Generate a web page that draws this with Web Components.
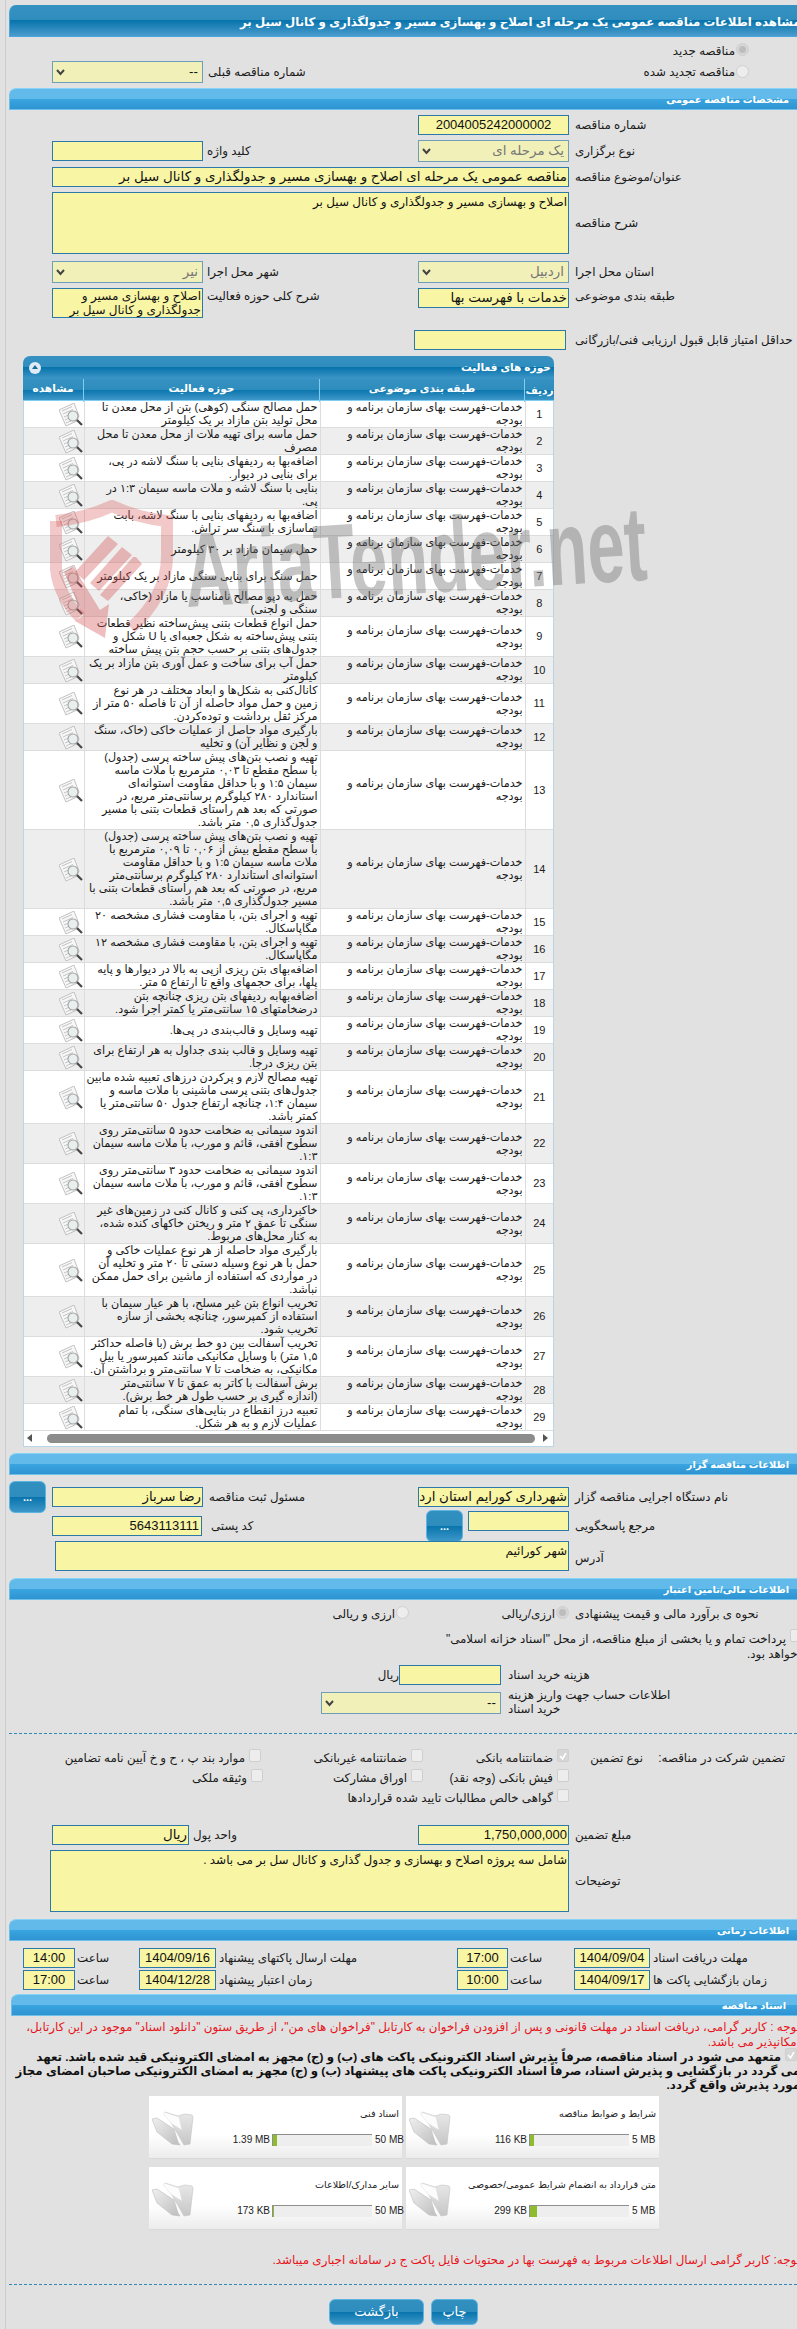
<!DOCTYPE html>
<html lang="fa">
<head>
<meta charset="utf-8">
<title>مشاهده اطلاعات مناقصه</title>
<style>
  html,body{margin:0;padding:0;width:797px;height:2329px;overflow:hidden}
  body{background:linear-gradient(#cbcbcb,#cbcbcb) 5px 0/1px 100% no-repeat #e1e1e1;padding-top:5px;box-sizing:border-box;position:relative;
    font:11.850px "Liberation Sans","DejaVu Sans",sans-serif;color:#1a1a1a}
  .std{grid-template-columns:52px 151px 215px 151px 1fr}
  .a{grid-column:2}.b{grid-column:3}.c{grid-column:4}.d{grid-column:5}
  .wide{grid-column:2/5}
  .rt{justify-self:end}
  .mid{align-self:center}
  .num{font-size:13px}
</style>
</head>
<body>
<page-title style="margin-left:9px">مشاهده اطلاعات مناقصه عمومی یک مرحله ای اصلاح و بهسازی مسیر و جدولگذاری و کانال سیل بر</page-title>

<form-row style="margin-top:6px;height:13px;grid-template-columns:749px">
  <x-choice class="rt" type="radio" state="on">مناقصه جدید</x-choice>
</form-row>
<form-row style="margin-top:5px;height:22px;grid-template-columns:52px 151px 546px">
  <x-select class="a">--</x-select>
  <x-label class="b" style="grid-row:1;justify-self:start;padding-left:5px;align-self:center">شماره مناقصه قبلی</x-label>
  <x-choice class="b rt" style="grid-row:1;--bm:1px" type="radio">مناقصه تجدید شده</x-choice>
</form-row>

<section-bar style="margin-top:5px">مشخصات مناقصه عمومی</section-bar>

<form-row class="std" style="margin-top:5px;height:20px">
  <x-field class="c num" style="text-align:center">2004005242000002</x-field>
  <x-label class="d" style="padding-left:6px">شماره مناقصه</x-label>
</form-row>
<form-row class="std" style="margin-top:5px;height:22px">
  <x-field class="a mid"></x-field>
  <x-label class="b" style="padding-left:4px">کلید واژه</x-label>
  <x-select class="c" off>یک مرحله ای</x-select>
  <x-label class="d" style="padding-left:6px">نوع برگزاری</x-label>
</form-row>
<form-row class="std" style="margin-top:5px;height:20px">
  <x-field class="wide">مناقصه عمومی یک مرحله ای اصلاح و بهسازی مسیر و جدولگذاری و کانال سیل بر</x-field>
  <x-label class="d" style="padding-left:6px">عنوان/موضوع مناقصه</x-label>
</form-row>
<form-row class="std" style="margin-top:5px;height:62px">
  <x-field class="wide" area>اصلاح و بهسازی مسیر و جدولگذاری و کانال سیل بر</x-field>
  <x-label class="d" style="padding-left:6px">شرح مناقصه</x-label>
</form-row>
<form-row class="std" style="margin-top:7px;height:22px">
  <x-select class="a" off>نیر</x-select>
  <x-label class="b" style="padding-left:4px">شهر محل اجرا</x-label>
  <x-select class="c" off>اردبیل</x-select>
  <x-label class="d" style="padding-left:6px">استان محل اجرا</x-label>
</form-row>
<form-row class="std" style="margin-top:5px;height:30px">
  <x-field class="a" area style="padding-top:0;line-height:14px">اصلاح و بهسازی مسیر و<br>جدولگذاری و کانال سیل بر</x-field>
  <x-label class="b" style="padding-left:4px;align-self:start">شرح کلی حوزه فعالیت</x-label>
  <x-field class="c" style="height:20px;align-self:start">خدمات با فهرست بها</x-field>
  <x-label class="d" style="padding-left:6px;align-self:start">طبقه بندی موضوعی</x-label>
</form-row>
<form-row style="margin-top:12px;height:20px;grid-template-columns:414px 152px 1fr">
  <x-field style="grid-column:2"></x-field>
  <x-label style="grid-column:3;padding-left:9px">حداقل امتیاز قابل قبول ارزیابی فنی/بازرگانی</x-label>
</form-row>

<activity-table style="margin:6px 0 0 23px"></activity-table>

<section-bar style="margin-top:6px">اطلاعات مناقصه گزار</section-bar>

<form-row class="std" style="margin-top:6px;height:23px">
  <x-btn style="margin-left:9px;width:37px" dots>...</x-btn>
  <x-field class="a mid">رضا سرباز</x-field>
  <x-label class="b" style="padding-left:6px">مسئول ثبت مناقصه</x-label>
  <x-field class="c mid">شهرداری کورایم استان ارد</x-field>
  <x-label class="d" style="padding-left:6px">نام دستگاه اجرایی مناقصه گزار</x-label>
</form-row>
<form-row style="margin-top:6px;height:26px;grid-template-columns:52px 150px 224px 37px 5px 101px 1fr">
  <x-field class="mid num" style="grid-column:2;height:20px;padding-right:2px">5643113111</x-field>
  <x-label style="grid-column:3;padding-left:9px">کد پستی</x-label>
  <x-btn style="grid-column:4" dots>...</x-btn>
  <x-field style="grid-column:6;height:20px;margin-top:1px;align-self:start"></x-field>
  <x-label style="grid-column:7;padding-left:6px">مرجع پاسخگویی</x-label>
</form-row>
<form-row style="margin-top:5px;height:30px;grid-template-columns:55px 514px 1fr">
  <x-field style="grid-column:2" area>شهر کورائیم</x-field>
  <x-label style="grid-column:3;padding-left:6px;padding-top:4px">آدرس</x-label>
</form-row>

<section-bar style="margin-top:7px">اطلاعات مالی/تامین اعتبار</section-bar>

<form-row style="margin-top:6px;height:14px;grid-template-columns:333px 76px 93px 67px 1fr">
  <x-choice class="rt" style="grid-column:2" type="radio">ارزی و ریالی</x-choice>
  <x-choice class="rt" style="grid-column:4" type="radio" state="on">ارزی/ریالی</x-choice>
  <x-label style="grid-column:5;padding-left:6px">نحوه ی برآورد مالی و قیمت پیشنهادی</x-label>
</form-row>
<form-row style="margin-top:9px;height:17px;grid-template-columns:433px 353px 1fr">
  <x-label style="grid-column:2;justify-self:end;padding-top:2px">پرداخت تمام و یا بخشی از مبلغ مناقصه، از محل "اسناد خزانه اسلامی"</x-label>
  <x-choice style="grid-column:3;align-self:start;--bm:0px" type="check"></x-choice>
</form-row>
<form-row style="height:14px;grid-template-columns:747px 1fr">
  <x-label style="grid-column:2">خواهد بود.</x-label>
</form-row>
<form-row style="margin-top:5px;height:20px;grid-template-columns:380px 19px 102px 1fr">
  <x-label style="grid-column:2">ریال</x-label>
  <x-field style="grid-column:3"></x-field>
  <x-label style="grid-column:4;padding-left:7px">هزینه خرید اسناد</x-label>
</form-row>
<form-row style="margin-top:5px;height:22px;grid-template-columns:321px 180px 1fr">
  <x-select style="grid-column:2">--</x-select>
  <x-label style="grid-column:3;padding-left:7px;align-self:start;margin-top:-2px;line-height:14px;white-space:normal">اطلاعات حساب جهت واریز هزینه<br>خرید اسناد</x-label>
</form-row>

<dash-line style="margin-top:21px"></dash-line>

<form-row style="margin-top:14px;height:20px;grid-template-columns:261px 162px 146px 74px 142px">
  <x-choice class="rt" type="check">موارد بند پ ، ح و خ آیین نامه تضامین</x-choice>
  <x-choice class="rt" type="check">ضمانتنامه غیربانکی</x-choice>
  <x-choice class="rt" type="check" state="on">ضمانتنامه بانکی</x-choice>
  <x-label class="rt">نوع تضمین</x-label>
  <x-label class="rt">تضمین شرکت در مناقصه:</x-label>
</form-row>
<form-row style="height:20px;grid-template-columns:263px 160px 146px">
  <x-choice class="rt" type="check">وثیقه ملکی</x-choice>
  <x-choice class="rt" type="check">اوراق مشارکت</x-choice>
  <x-choice class="rt" type="check">فیش بانکی (وجه نقد)</x-choice>
</form-row>
<form-row style="height:20px;grid-template-columns:569px">
  <x-choice class="rt" type="check">گواهی خالص مطالبات تایید شده قراردادها</x-choice>
</form-row>

<form-row style="margin-top:17px;height:20px;grid-template-columns:52px 137px 229px 151px 1fr">
  <x-field style="grid-column:2">ریال</x-field>
  <x-label style="grid-column:3;padding-left:4px">واحد پول</x-label>
  <x-field class="num" style="grid-column:4">1,750,000,000</x-field>
  <x-label style="grid-column:5;padding-left:6px">مبلغ تضمین</x-label>
</form-row>
<form-row style="margin-top:5px;height:62px;grid-template-columns:50px 519px 1fr">
  <x-field style="grid-column:2" area>شامل سه پروژه اصلاح و بهسازی و جدول گذاری و کانال سل بر می باشد .</x-field>
  <x-label style="grid-column:3;padding-left:6px">توضیحات</x-label>
</form-row>

<section-bar style="margin-top:7px">اطلاعات زمانی</section-bar>

<form-row style="margin-top:7px;height:20px;grid-template-columns:23px 52px 64px 77px 241px 51px 66px 76px 1fr">
  <x-field class="num" style="grid-column:2;text-align:center">14:00</x-field>
  <x-label style="padding-left:2px">ساعت</x-label>
  <x-field class="num" style="text-align:center">1404/09/16</x-field>
  <x-label style="padding-left:3px">مهلت ارسال پاکتهای پیشنهاد</x-label>
  <x-field class="num" style="text-align:center">17:00</x-field>
  <x-label style="padding-left:2px">ساعت</x-label>
  <x-field class="num" style="text-align:center">1404/09/04</x-field>
  <x-label style="padding-left:3px">مهلت دریافت اسناد</x-label>
</form-row>
<form-row style="margin-top:2px;height:20px;grid-template-columns:23px 52px 64px 77px 241px 51px 66px 76px 1fr">
  <x-field class="num" style="grid-column:2;text-align:center">17:00</x-field>
  <x-label style="padding-left:2px">ساعت</x-label>
  <x-field class="num" style="text-align:center">1404/12/28</x-field>
  <x-label style="padding-left:3px">زمان اعتبار پیشنهاد</x-label>
  <x-field class="num" style="text-align:center">10:00</x-field>
  <x-label style="padding-left:2px">ساعت</x-label>
  <x-field class="num" style="text-align:center">1404/09/17</x-field>
  <x-label style="padding-left:3px">زمان بازگشایی پاکت ها</x-label>
</form-row>

<section-bar style="margin-top:4px;margin-left:11px;padding-right:11px">اسناد مناقصه</section-bar>

<note-text tone="red" style="margin-top:4px">توجه : کاربر گرامی، دریافت اسناد در مهلت قانونی و پس از افزودن فراخوان به کارتابل "فراخوان های من"، از طریق ستون "دانلود اسناد" موجود در این کارتابل،<br>امکانپذیر می باشد.</note-text>
<note-text tone="bold" style="margin-top:1px"><x-choice type="check" state="on" style="vertical-align:top;margin-right:3px;line-height:14px;--bm:-2px"></x-choice>متعهد می شود در اسناد مناقصه، صرفاً پذیرش اسناد الکترونیکی پاکت های (ب) و (ج) مجهز به امضای الکترونیکی قید شده باشد. تعهد<br>می گردد در بازگشایی و پذیرش اسناد، صرفاً اسناد الکترونیکی پاکت های پیشنهاد (ب) و (ج) مجهز به امضای الکترونیکی صاحبان امضای مجاز<br>مورد پذیرش واقع گردد.</note-text>

<form-row style="margin-top:4px;grid-template-columns:149px 253px 4px 253px;row-gap:8px">
  <doc-card style="grid-column:2" title="اسناد فنی" used="1.39 MB" max="50 MB" fill="4"></doc-card>
  <doc-card style="grid-column:4" title="شرایط و ضوابط مناقصه" used="116 KB" max="5 MB" fill="4"></doc-card>
  <doc-card style="grid-column:2" title="سایر مدارک/اطلاعات" used="173 KB" max="50 MB" fill="1"></doc-card>
  <doc-card style="grid-column:4" title="متن قرارداد به انضمام شرایط عمومی/خصوصی" used="299 KB" max="5 MB" fill="7"></doc-card>
</form-row>

<note-text tone="red" style="margin-top:23px">توجه: کاربر گرامی ارسال اطلاعات مربوط به فهرست بها در محتویات فایل پاکت ج در سامانه اجباری میباشد.</note-text>

<dash-line style="margin-top:16px"></dash-line>

<form-row style="margin-top:14px;height:26px;grid-template-columns:329px 95px 7px 47px">
  <x-btn style="grid-column:2">بازگشت</x-btn>
  <x-btn style="grid-column:4">چاپ</x-btn>
</form-row>

<water-mark></water-mark>

<script>
// نوار عنوان صفحه
class PageTitle extends HTMLElement {
  constructor() {
    super();
    this.attachShadow({ mode: "open" }).innerHTML = `
      <style>
        :host{display:block;height:32px;box-sizing:border-box;border:1px solid #4ba6de;border-width:0 0 1px 1px;border-top-left-radius:7px;
          background:linear-gradient(#3591c1 0,#2f8dbe 50%,#0874ac 50%,#4a9ccd 100%);
          color:#fff;font-weight:bold;font-size:11.750px;line-height:33px;white-space:nowrap;overflow:hidden;padding-left:230px;direction:ltr}
        span{direction:rtl;unicode-bidi:isolate;display:inline-block}
      </style><span><slot></slot></span>`;
  }
}
customElements.define("page-title", PageTitle);

// نوار عنوان بخش ها
class SectionBar extends HTMLElement {
  constructor() {
    super();
    this.attachShadow({ mode: "open" }).innerHTML = `
      <style>
        :host{display:block;height:22px;box-sizing:border-box;margin-left:9px;border-top:1px solid #86d3f5;border-bottom:1px solid #6cc0ea;border-left:1px solid #6cc0ea;border-top-left-radius:7px;
          background:linear-gradient(#62baea 0,#62baea 50%,#39a5e0 50%,#2f93d2 100%);
          color:#fff;font-weight:bold;font-size:9.800px;line-height:21px;direction:rtl;padding-right:8px;white-space:nowrap}
      </style><slot></slot>`;
  }
}
customElements.define("section-bar", SectionBar);

// سطر فرم: ستون ها از استایل خود عنصر می آیند
class FormRow extends HTMLElement {
  constructor() {
    super();
    this.attachShadow({ mode: "open" }).innerHTML = `
      <style>:host{display:grid;direction:ltr;align-items:center}</style><slot></slot>`;
  }
}
customElements.define("form-row", FormRow);

class XLabel extends HTMLElement {
  constructor() {
    super();
    this.attachShadow({ mode: "open" }).innerHTML = `
      <style>:host{display:block;direction:rtl;text-align:left;white-space:nowrap;line-height:16px;color:#1a1a1a}</style><slot></slot>`;
  }
}
customElements.define("x-label", XLabel);

class XField extends HTMLElement {
  constructor() {
    super();
    this.attachShadow({ mode: "open" }).innerHTML = `
      <style>
        :host{display:block;box-sizing:border-box;height:20px;border:1px solid #2a79a8;background:#f8f5a4;direction:rtl;
          padding:0 1px;font-size:13.400px;line-height:18px;white-space:nowrap;overflow:hidden;color:#111}
        :host([area]){height:100%;white-space:nowrap;line-height:14.300px;padding-top:2px;font-size:12px}
      </style><slot></slot>`;
  }
}
customElements.define("x-field", XField);

class XSelect extends HTMLElement {
  constructor() {
    super();
    this.attachShadow({ mode: "open" }).innerHTML = `
      <style>
        :host{display:block;box-sizing:border-box;height:22px;border:1px solid #6f9fb8;background:#f1f0b9;direction:rtl;position:relative;
          padding:0 4px;font-size:13.400px;line-height:20px;white-space:nowrap;color:#111}
        :host([off]){color:#777}
        svg{position:absolute;left:3px;top:7px}
      </style><slot></slot>
      <svg width="9" height="7" viewBox="0 0 9 7"><path d="M1 1l3.500 4L8 1" fill="none" stroke="#444" stroke-width="2"/></svg>`;
  }
}
customElements.define("x-select", XSelect);

// رادیو و چک باکس غیرفعال به همراه متن
class XChoice extends HTMLElement {
  constructor() {
    super();
    const radio = this.getAttribute("type") === "radio";
    const on = this.getAttribute("state") === "on";
    let mark = "";
    if (on && radio) mark = `<i class="dot"></i>`;
    if (on && !radio) mark = `<svg width="11" height="12" viewBox="0 0 12 12"><path d="M2.500 6l3 3.500L9.500 2.500" fill="none" stroke="#fff" stroke-width="2"/></svg>`;
    this.attachShadow({ mode: "open" }).innerHTML = `
      <style>
        :host{display:inline-flex;direction:rtl;gap:${radio ? 1 : 4}px;align-items:flex-start;white-space:nowrap;line-height:16px;color:#1a1a1a}
        b{flex:none;box-sizing:border-box;width:${radio ? 13 : 12}px;height:13px;border:1px solid #cfcfcf;background:#ededed;display:flex;align-items:center;justify-content:center;
          border-radius:${radio ? "50%" : "2px"};margin-top:var(--bm,${radio ? 0 : -1}px);font-weight:normal}
        b.on{background:#d6d6d6}
        .dot{width:7px;height:7px;border-radius:50%;background:#bdbdbd}
      </style>
      <b class="${on ? "on" : ""}">${mark}</b><span><slot></slot></span>`;
  }
}
customElements.define("x-choice", XChoice);

class XBtn extends HTMLElement {
  constructor() {
    super();
    this.attachShadow({ mode: "open" }).innerHTML = `
      <style>
        :host{display:block;box-sizing:border-box;height:26px;border:1px solid #5bb5e0;border-radius:6px;text-align:center;color:#fff;font-size:13px;line-height:24px;
          background:linear-gradient(#3290c1 0,#2f8dbe 50%,#0874ac 50%,#3d97c9 100%)}
        :host([dots]){height:100%;font-size:11px;font-weight:bold;line-height:30px}
      </style><slot></slot>`;
  }
}
customElements.define("x-btn", XBtn);

class DashLine extends HTMLElement {
  constructor() {
    super();
    this.attachShadow({ mode: "open" }).innerHTML = `
      <style>:host{display:block;margin-left:9px;border-top:1px dashed #2f88b8;height:0}</style>`;
  }
}
customElements.define("dash-line", DashLine);

class NoteText extends HTMLElement {
  constructor() {
    super();
    this.attachShadow({ mode: "open" }).innerHTML = `
      <style>
        :host{display:block;direction:rtl;width:800px;white-space:nowrap;line-height:14px;color:#111}
        :host([tone=red]){color:#e8141c;font-size:11.900px;line-height:14.500px}
        :host([tone=bold]){font-weight:bold;font-size:11.800px;line-height:14px}
      </style><slot></slot>`;
  }
}
customElements.define("note-text", NoteText);

const FOLDER_ICON = `<svg width="42" height="36" viewBox="0 0 42 36">
  <defs>
    <linearGradient id="f" x1="0" y1="0" x2="1" y2="1"><stop offset="0" stop-color="#f0f0f0"/><stop offset="1" stop-color="#bdbdbd"/></linearGradient>
    <linearGradient id="k" x1="0" y1="0" x2="0" y2="1"><stop offset="0" stop-color="#e9e9e9"/><stop offset="1" stop-color="#c6c6c6"/></linearGradient>
  </defs>
  <path d="M13 2l13 4 7-2 7 1 1 2-3 27-6 1z" fill="url(#k)" stroke="#c2c2c2" stroke-width=".6"/>
  <path d="M12 2l15 5 3 13-10-6-8-9z" fill="#fcfcfc" stroke="#dcdcdc" stroke-width=".5"/>
  <path d="M0 9l5-1 17 11 4 13 2 3-8-1-15-12z" fill="url(#f)" stroke="#bdbdbd" stroke-width=".6"/>
</svg>`;

class DocCard extends HTMLElement {
  constructor() {
    super();
    const a = (n) => this.getAttribute(n);
    this.attachShadow({ mode: "open" }).innerHTML = `
      <style>
        :host{display:block;box-sizing:border-box;height:63px;position:relative;border-bottom:1px solid #d8d8d8;
          background:linear-gradient(#fff 0,#fff 62%,#ececec 100%);direction:ltr;font-size:9.600px;color:#222}
        .ico{position:absolute;left:3px;top:14px}
        .t{direction:rtl;text-align:right;padding:11px 3px 0 0;line-height:14px;white-space:nowrap}
        .s{position:absolute;left:0;right:0;top:37px;display:grid;grid-template-columns:123px 100px 30px;line-height:13px;align-items:center;font-size:10px;white-space:nowrap}
        .u{text-align:right;padding-right:2px}.m{padding-left:3px;text-align:left}
        .bar{height:12px;background:#eeeeee;border-top:1px solid #8e8e8e;box-sizing:border-box;border-left:1px solid #8e8e8e}
        .bar i{display:block;height:100%;width:${a("fill")}px;background:#8fbc2f}
      </style>
      <div class="ico">${FOLDER_ICON}</div>
      <div class="t">${a("title")}</div>
      <div class="s"><span class="u">${a("used")}</span><div class="bar"><i></i></div><span class="m">${a("max")}</span></div>`;
  }
}
customElements.define("doc-card", DocCard);

// جدول حوزه های فعالیت؛ شکست سطرها مثل تصویر ثابت است
const CAT = "خدمات-فهرست بهای سازمان برنامه و<br>بودجه";
const ACTIVITIES = [
  "حمل مصالح سنگی (کوهی) بتن از محل معدن تا<br>محل تولید بتن مازاد بر یک کیلومتر",
  "حمل ماسه برای تهیه ملات از محل معدن تا محل<br>مصرف",
  "اضافه‌بها به ردیفهای بنایی با سنگ لاشه در پی،<br>برای بنایی در دیوار.",
  "بنایی با سنگ لاشه و ملات ماسه سیمان ۱:۳ در<br>پی.",
  "اضافه‌بها به ردیفهای بنایی با سنگ لاشه، بابت<br>نماسازی با سنگ سر تراش.",
  "حمل سیمان مازاد بر ۳۰ کیلومتر",
  "حمل سنگ برای بنایی سنگی مازاد بر یک کیلومتر",
  "حمل به دپو مصالح نامناسب یا مازاد (خاکی،<br>سنگی و لجنی)",
  "حمل انواع قطعات بتنی پیش‌ساخته نظیر قطعات<br>بتنی پیش‌ساخته به شکل جعبه‌ای یا U شکل و<br>جدول‌های بتنی بر حسب حجم بتن پیش ساخته",
  "حمل آب برای ساخت و عمل آوری بتن مازاد بر یک<br>کیلومتر",
  "کانال‌کنی به شکل‌ها و ابعاد مختلف در هر نوع<br>زمین و حمل مواد حاصله از آن تا فاصله ۵۰ متر از<br>مرکز ثقل برداشت و توده‌کردن.",
  "بارگیری مواد حاصل از عملیات خاکی (خاک، سنگ<br>و لجن و نظایر آن) و تخلیه",
  "تهیه و نصب بتن‌های پیش ساخته پرسی (جدول)<br>با سطح مقطع تا ۰,۰۳ مترمربع با ملات ماسه<br>سیمان ۱:۵ و با حداقل مقاومت استوانه‌ای<br>استاندارد ۲۸۰ کیلوگرم برسانتی‌متر مربع، در<br>صورتی که بعد هم راستای قطعات بتنی با مسیر<br>جدول‌گذاری ۰,۵ متر باشد.",
  "تهیه و نصب بتن‌های پیش ساخته پرسی (جدول)<br>با سطح مقطع بیش از ۰,۰۶ تا ۰,۰۹ مترمربع با<br>ملات ماسه سیمان ۱:۵ و با حداقل مقاومت<br>استوانه‌ای استاندارد ۲۸۰ کیلوگرم برسانتی‌متر<br>مربع، در صورتی که بعد هم راستای قطعات بتنی با<br>مسیر جدول‌گذاری ۰,۵ متر باشد.",
  "تهیه و اجرای بتن، با مقاومت فشاری مشخصه ۲۰<br>مگاپاسکال.",
  "تهیه و اجرای بتن، با مقاومت فشاری مشخصه ۱۲<br>مگاپاسکال.",
  "اضافه‌بهای بتن ریزی ازپی به بالا در دیوارها و پایه<br>پلها، برای حجمهای واقع تا ارتفاع ۵ متر.",
  "اضافه‌بهابه ردیفهای بتن ریزی چنانچه بتن<br>درضخامتهای ۱۵ سانتی‌متر یا کمتر اجرا شود.",
  "تهیه وسایل و قالب‌بندی در پی‌ها.",
  "تهیه وسایل و قالب بندی جداول به هر ارتفاع برای<br>بتن ریزی درجا.",
  "تهیه مصالح لازم و پرکردن درزهای تعبیه شده مابین<br>جدول‌های بتنی پرسی ماشینی با ملات ماسه و<br>سیمان ۱:۴، چنانچه ارتفاع جدول ۵۰ سانتی‌متر یا<br>کمتر باشد.",
  "اندود سیمانی به ضخامت حدود ۵ سانتی‌متر روی<br>سطوح افقی، قائم و مورب، با ملات ماسه سیمان<br>۱:۳.",
  "اندود سیمانی به ضخامت حدود ۳ سانتی‌متر روی<br>سطوح افقی، قائم و مورب، با ملات ماسه سیمان<br>۱:۳.",
  "خاکبرداری، پی کنی و کانال کنی در زمین‌های غیر<br>سنگی تا عمق ۲ متر و ریختن خاکهای کنده شده،<br>به کنار محل‌های مربوط.",
  "بارگیری مواد حاصله از هر نوع عملیات خاکی و<br>حمل با هر نوع وسیله دستی تا ۲۰ متر و تخلیه آن<br>در مواردی که استفاده از ماشین برای حمل ممکن<br>نباشد.",
  "تخریب انواع بتن غیر مسلح، با هر عیار سیمان با<br>استفاده از کمپرسور، چنانچه بخشی از سازه<br>تخریب شود.",
  "تخریب آسفالت بین دو خط برش (با فاصله حداکثر<br>۱,۵ متر) با وسایل مکانیکی مانند کمپرسور یا بیل<br>مکانیکی، به ضخامت تا ۷ سانتی‌متر و برداشتن آن.",
  "برش آسفالت با کاتر به عمق تا ۷ سانتی‌متر<br>(اندازه گیری بر حسب طول هر خط برش).",
  "تعبیه درز انقطاع در بنایی‌های سنگی، با تمام<br>عملیات لازم و به هر شکل."
];
const VIEW_ICON = `<svg width="24" height="24" viewBox="0 0 24 24">
  <path d="M0 7L15 0l5 13-2 5-11 5z" fill="#f7f7f7" stroke="#b4b4b4" stroke-width=".8"/>
  <path d="M3 8l10-4.500M4 11l10-4.500M5 14l6-2.700M6 17l4-1.800M7 20l5-2.200" stroke="#c4c4c4" stroke-width="1" fill="none"/>
  <circle cx="14" cy="13" r="5" fill="#e9efef" stroke="#a3a3a3" stroke-width="1.100"/>
  <path d="M18 17l5 5" stroke="#474747" stroke-width="2.200"/>
</svg>`;

class ActivityTable extends HTMLElement {
  constructor() {
    super();
    const rows = ACTIVITIES.map((text, i) => `
      <tr>
        <td class="v"><div class="i">${VIEW_ICON}</div></td>
        <td class="t">${text}</td>
        <td class="t">${CAT}</td>
        <td class="n">${i + 1}</td>
      </tr>`).join("");
    this.attachShadow({ mode: "open" }).innerHTML = `
      <style>
        :host{display:block;width:531px;height:1091px;box-sizing:border-box;background:#fff;border:1px solid #b9d5e8;border-top:0;border-top-left-radius:7px;border-top-right-radius:7px;direction:ltr}
        .cap{height:23px;box-sizing:border-box;border-top-left-radius:7px;border-top-right-radius:7px;position:relative;margin:0 -1px;
          background:linear-gradient(#3591c1 0,#2f8dbe 50%,#0874ac 50%,#3f97c9 100%);color:#fff;font-weight:bold;font-size:10.600px;line-height:23px;direction:rtl;padding-right:3px}
        .cap i{position:absolute;left:6px;top:6px;width:12px;height:12px;border-radius:50%;background:#dfeaf4}
        .cap i:after{content:"";position:absolute;left:3px;top:3px;border:3px solid transparent;border-top:0;border-bottom:4px solid #17699c}
        .head{display:grid;grid-template-columns:61px 236px 205px 1fr;height:22px;margin:0 -1px;background:linear-gradient(#3591c1 0,#2f8dbe 50%,#0874ac 50%,#3f97c9 100%);border-bottom:1px solid #7fcdf0;box-sizing:border-box}
        .head b{color:#fff;font-size:10.600px;text-align:center;line-height:18px;border-right:1px solid #7fcdf0;direction:rtl}
        .head b:last-child{border:0;line-height:23px}
        table{border-collapse:collapse;table-layout:fixed;width:529px;direction:ltr;font-size:11.200px;color:#1a1a1a}
        col.c1{width:60px}col.c2{width:236px}col.c3{width:205px}col.c4{width:28px}
        td{padding:0;line-height:13px;border-bottom:1px solid #dcdcdc;border-right:1px solid #dcdcdc;white-space:nowrap}
        td:last-child{border-right:0}
        tr:nth-child(even) td{background:#eeeeee}
        .t{direction:rtl;text-align:right;padding-right:2px}
        .n{text-align:center;font-size:11px}
        .i{display:flex;justify-content:flex-end;padding-right:1px;height:24px;margin-top:1px}
        .sb{height:15px;position:relative}
        .sb u{position:absolute;left:23px;right:18px;top:3px;height:9px;background:#8c8c8c;border-radius:5px}
        .sb s{position:absolute;top:3px;width:0;height:0;border:4px solid transparent}
        .sb .l{left:3px;border-left:0;border-right:5px solid #555}
        .sb .r{right:5px;border-right:0;border-left:5px solid #555}
      </style>
      <div class="cap">حوزه های فعالیت<i></i></div>
      <div class="head"><b>مشاهده</b><b>حوزه فعالیت</b><b>طبقه بندی موضوعی</b><b>ردیف</b></div>
      <table><colgroup><col class="c1"><col class="c2"><col class="c3"><col class="c4"></colgroup><tbody>${rows}</tbody></table>
      <div class="sb"><s class="l"></s><u></u><s class="r"></s></div>`;
  }
}
customElements.define("activity-table", ActivityTable);

// واترمارک روی جدول
class WaterMark extends HTMLElement {
  constructor() {
    super();
    this.attachShadow({ mode: "open" }).innerHTML = `
      <style>
        :host{position:absolute;left:50px;top:500px;width:610px;height:140px;pointer-events:none;direction:ltr}
        svg{position:absolute;left:0;top:0}
        span{position:absolute;left:138px;top:10px;font:bold 106px/120px "Liberation Sans",sans-serif;color:rgba(110,110,110,.4);white-space:nowrap;
          transform-origin:0 100%;transform:rotate(-3.400deg) scaleX(.63)}
      </style>
      <svg width="125" height="140" viewBox="0 0 125 140">
        <g fill="none" stroke="rgba(214,84,84,.32)" stroke-width="12">
          <path d="M6 21C25 19 45 14 62 6c17 8 37 13 55 15v35c0 28-14 52-36 72"/>
          <path d="M6 21v48c2 20 12 36 24 48"/>
        </g>
        <g fill="rgba(214,84,84,.38)">
          <path d="M58 36l10 8-34 36-9-8zM72 47l10 8-33 36-9-8zM86 57l-3 0-33 38 8 6 34-37z"/>
          <path d="M14 72l9-6 27 44 9-6-4 34-30-17 8-5z"/>
        </g>
      </svg>
      <span>AriaTender.net</span>`;
  }
}
customElements.define("water-mark", WaterMark);
</script>
</body>
</html>
